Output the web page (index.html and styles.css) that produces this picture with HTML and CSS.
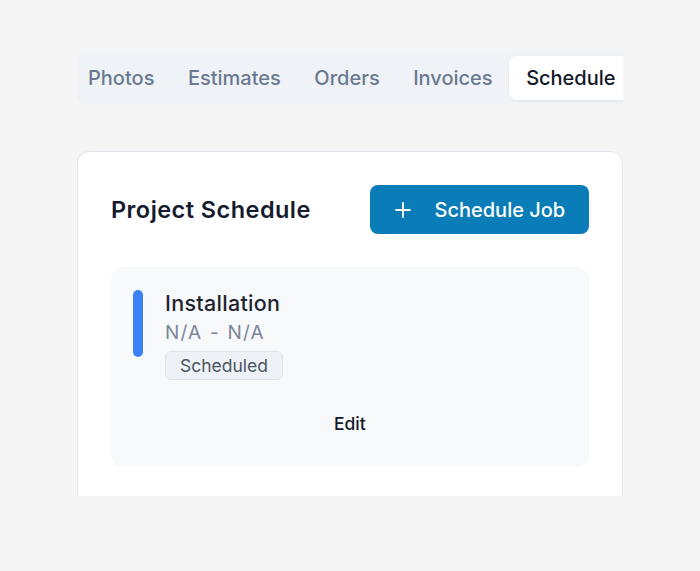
FILE: index.html
```html
<!DOCTYPE html>
<html>
<head>
<meta charset="utf-8">
<link rel="stylesheet" href="styles.css">
</head>
<body>
<div class="page">
  <nav class="tabs">
    <div class="tab">Photos</div>
    <div class="tab">Estimates</div>
    <div class="tab">Orders</div>
    <div class="tab">Invoices</div>
    <div class="tab active">Schedule</div>
  </nav>
  <div class="viewport">
    <section class="card">
      <header class="card-head">
        <h2 class="title">Project Schedule</h2>
        <button class="btn-primary">
          <svg class="plus" width="16" height="16" viewBox="0 0 16 16" fill="none" stroke="currentColor" stroke-width="1.8" stroke-linecap="round"><path d="M8 1v14M1 8h14"/></svg>
          <span>Schedule Job</span>
        </button>
      </header>
      <div class="job">
        <div class="job-main">
          <div class="bar"></div>
          <div class="job-info">
            <div class="job-name">Installation</div>
            <div class="job-date">N/A - N/A</div>
            <span class="badge">Scheduled</span>
          </div>
        </div>
        <div class="job-actions">
          <button class="btn-link">Edit</button>
        </div>
      </div>
    </section>
  </div>
</div>
</body>
</html>
```
FILE: styles.css
```css
* { box-sizing: border-box; }
html, body { margin: 0; padding: 0; }
body {
  background: #f5f5f6;
  font-family: Inter, "Noto Sans", sans-serif;
  color: #111827;
  width: 700px;
  height: 571px;
  overflow: hidden;
}
.page {
  width: 546px;
  margin: 0 0 0 76.5px;
  padding-top: 52px;
}
.tabs {
  display: flex;
  background: #eff2f6;
  border-radius: 8px 0 0 8px;
  padding: 4px 0 4px 0;
  height: 52px;
  overflow: hidden;
}
.tab {
  flex: none;
  padding: 0 16.75px;
  display: flex;
  align-items: center;
  font-size: 20px;
  font-weight: 500;
  color: #6b7a90;
  border-radius: 7px;
}
.tab:first-child { padding-left: 11.5px; }
.tab.active {
  background: #fff;
  color: #111827;
  box-shadow: 0 1px 3px rgba(15, 23, 42, 0.08);
}
.viewport {
  margin-top: 47px;
  height: 345px;
  overflow: hidden;
}
.card {
  background: #fff;
  border: 1px solid #e3e6ec;
  border-radius: 12px;
  padding: 33px 33px 28px 33.5px;
  box-shadow: 0 1px 2px rgba(0,0,0,0.04);
  min-height: 400px;
}
.card-head {
  display: flex;
  justify-content: space-between;
  align-items: center;
  margin-bottom: 33px;
}
.title {
  margin: 0;
  font-size: 23.5px;
  font-weight: 600;
  letter-spacing: 0.45px;
  color: #161b2e;
}
.btn-primary {
  display: flex;
  align-items: center;
  gap: 24px;
  height: 49px;
  padding: 0 20px 0 25px;
  background: #0a7cb7;
  color: #fff;
  border: none;
  border-radius: 8px;
  font-family: inherit;
  font-size: 20px;
  font-weight: 500;
  width: 219px;
}
.plus { flex: none; }
.job {
  background: #f8f9fb;
  border-radius: 12px;
  height: 200px;
  padding: 22px 22px 0;
}
.job-main {
  display: flex;
  gap: 22px;
}
.bar {
  width: 10px;
  height: 67px;
  margin-top: 1px;
  background: #3b82f6;
  border-radius: 5px;
  flex: none;
}
.job-info {
  display: flex;
  flex-direction: column;
  align-items: flex-start;
}
.job-name {
  font-size: 21.5px;
  font-weight: 500;
  letter-spacing: 0.3px;
  color: #1f2430;
  line-height: 28px;
}
.job-date {
  font-size: 19px;
  letter-spacing: 1.2px;
  word-spacing: 1px;
  color: #7a8699;
  line-height: 32px;
}
.badge {
  margin-top: 2px;
  font-size: 17.5px;
  color: #4b5563;
  background: #eef1f5;
  border: 1px solid #dfe4eb;
  border-radius: 6px;
  padding: 1px 14px;
  line-height: 25px;
}
.job-actions {
  display: flex;
  justify-content: center;
  margin-top: 32px;
}
.btn-link {
  background: none;
  border: none;
  font-family: inherit;
  font-size: 17.5px;
  font-weight: 500;
  color: #111827;
}
```
